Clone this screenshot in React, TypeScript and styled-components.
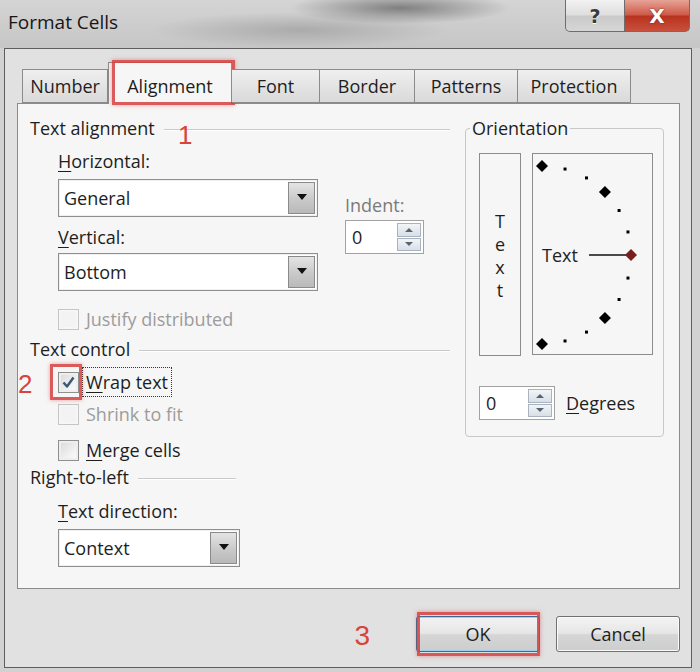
import React from 'react';
import styled, { createGlobalStyle } from 'styled-components';

const GlobalStyle = createGlobalStyle`
  html, body {
    margin: 0;
    padding: 0;
  }
  body {
    font-family: "Open Sans", "Noto Sans", "Liberation Sans", sans-serif;
    color: #1e1e1e;
  }
`;

const Window = styled.div`
  width: 700px;
  height: 672px;
  background: #d2d2d2;
  display: flex;
  flex-direction: column;
  overflow: hidden;
`;

const TitleBar = styled.div`
  height: 48px;
  flex-shrink: 0;
  display: flex;
  align-items: flex-start;
  background:
    radial-gradient(ellipse 110px 16px at 400px 8px, rgba(60, 60, 60, 0.55), transparent),
    radial-gradient(ellipse 150px 18px at 300px 30px, rgba(110, 110, 110, 0.35), transparent),
    linear-gradient(#d4d4d4, #c6c6c6);
`;

const Title = styled.div`
  flex: 1;
  font-size: 19px;
  line-height: 26px;
  padding: 9px 0 0 8px;
  color: #161616;
`;

const CaptionButtons = styled.div`
  display: flex;
  margin-right: 10px;
`;

const CaptionButton = styled.div<{ $close?: boolean }>`
  width: ${(p) => (p.$close ? 65 : 60)}px;
  height: 32px;
  box-sizing: border-box;
  display: flex;
  align-items: center;
  justify-content: center;
  border: 1px solid #6d6d6d;
  border-top: none;
  border-left: ${(p) => (p.$close ? 'none' : '1px solid #6d6d6d')};
  border-radius: ${(p) => (p.$close ? '0 0 5px 0' : '0 0 0 5px')};
  background: ${(p) =>
    p.$close
      ? 'linear-gradient(#e6a397, #cf5a48 48%, #b8321f 52%, #c9503c)'
      : 'linear-gradient(#f2f2f2, #dedede 48%, #cacaca 52%, #d6d6d6)'};
  color: ${(p) => (p.$close ? '#fff' : '#3a3a3a')};
  font-family: "DejaVu Sans", sans-serif;
  font-weight: bold;
  font-size: ${(p) => (p.$close ? 20 : 19)}px;
  text-shadow: ${(p) => (p.$close ? '0 0 2px #6a1a10' : '0 1px 0 #fff')};
`;

const Client = styled.div`
  flex: 1;
  margin: 0 8px 4px 4px;
  border: 1px solid #5e5e5e;
  background: #e1e1e1;
  padding: 12px 11px 0 12px;
  display: flex;
  flex-direction: column;
`;

const TabsRow = styled.div`
  display: flex;
  align-items: flex-end;
  height: 42px;
  padding-left: 5px;
  position: relative;
  z-index: 1;
`;

const Tab = styled.div<{ $w: number; $active?: boolean }>`
  position: relative;
  width: ${(p) => p.$w}px;
  height: ${(p) => (p.$active ? 42 : 34)}px;
  box-sizing: border-box;
  margin-bottom: ${(p) => (p.$active ? -1 : 0)}px;
  border: 1px solid #8b8b8b;
  border-bottom: ${(p) => (p.$active ? 'none' : '1px solid #8b8b8b')};
  border-left: ${(p) => (p.$active ? '1px solid #8b8b8b' : 'none')};
  background: ${(p) => (p.$active ? '#f6f6f6' : 'linear-gradient(#efefef, #d9d9d9)')};
  font-size: 18px;
  display: flex;
  align-items: center;
  justify-content: center;
  padding-top: ${(p) => (p.$active ? 4 : 0)}px;
  &:first-child {
    border-left: 1px solid #8b8b8b;
  }
`;

const TabHighlight = styled.div`
  position: absolute;
  top: -3px;
  left: 3px;
  right: -4px;
  bottom: -1px;
  border: 3px solid rgba(214, 64, 64, 0.85);
  box-shadow: 0 0 4px rgba(214, 64, 64, 0.5);
`;

const Panel = styled.div`
  height: 486px;
  box-sizing: border-box;
  border: 1px solid #8b8b8b;
  background: #f6f6f6;
  padding: 12px 15px 0 12px;
  display: flex;
  gap: 15px;
`;

const LeftCol = styled.div`
  width: 420px;
  display: flex;
  flex-direction: column;
`;

const Heading = styled.div<{ $lineEnd?: number }>`
  position: relative;
  display: flex;
  align-items: center;
  font-size: 18px;
  line-height: 24px;
  width: ${(p) => (p.$lineEnd ? `${p.$lineEnd}px` : '100%')};
  &::after {
    content: '';
    flex: 1;
    height: 1px;
    margin: 3px 0 0 9px;
    background: #cacaca;
    box-shadow: 0 1px 0 #fff;
  }
`;

const Annotation = styled.span`
  position: absolute;
  color: #d8443b;
  font-family: "Liberation Sans", sans-serif;
  font-size: 26px;
  line-height: 1;
`;

const Indented = styled.div`
  padding-left: 28px;
  display: flex;
  flex-direction: column;
`;

const Label = styled.div<{ $mt?: number; $tone?: 'grey' | 'mid' }>`
  font-size: 18px;
  line-height: 24px;
  margin-top: ${(p) => p.$mt ?? 0}px;
  color: ${(p) => (p.$tone === 'grey' ? '#9c9c9c' : p.$tone === 'mid' ? '#7a7a7a' : '#1e1e1e')};
  u {
    text-decoration-thickness: 1px;
    text-underline-offset: 3px;
  }
`;

const AlignRow = styled.div`
  display: flex;
  gap: 27px;
`;

const Column = styled.div<{ $pt?: number }>`
  display: flex;
  flex-direction: column;
  padding-top: ${(p) => p.$pt ?? 0}px;
`;

const Select = styled.div<{ $w: number; $mt?: number }>`
  width: ${(p) => p.$w}px;
  height: 38px;
  margin-top: ${(p) => p.$mt ?? 0}px;
  box-sizing: border-box;
  border: 1px solid #8e8e8e;
  box-shadow: inset 0 0 0 1px #f0f0f0;
  background: #fff;
  display: flex;
  align-items: center;
  padding: 2px 2px 2px 5px;
  font-size: 18px;
`;

const SelectText = styled.span`
  flex: 1;
`;

const ArrowButton = styled.div`
  width: 27px;
  align-self: stretch;
  box-sizing: border-box;
  border: 1px solid #8a8a8a;
  background: linear-gradient(#e4e4e4, #c9c9c9 55%, #b9b9b9);
  display: flex;
  align-items: center;
  justify-content: center;
  &::before {
    content: '';
    width: 0;
    height: 0;
    margin-top: -3px;
    border-left: 5px solid transparent;
    border-right: 5px solid transparent;
    border-top: 6px solid #111;
  }
`;

const Spinner = styled.div<{ $w: number; $mt?: number }>`
  width: ${(p) => p.$w}px;
  height: 34px;
  margin-top: ${(p) => p.$mt ?? 0}px;
  box-sizing: border-box;
  border: 1px solid #a2a2a2;
  background: #fff;
  display: flex;
  align-items: stretch;
  padding: 2px;
  font-size: 18px;
`;

const SpinValue = styled.span`
  flex: 1;
  display: flex;
  align-items: center;
  padding-left: 4px;
`;

const SpinButtons = styled.div`
  width: 24px;
  display: flex;
  flex-direction: column;
  gap: 1px;
`;

const SpinButton = styled.div<{ $down?: boolean }>`
  flex: 1;
  border: 1px solid #a9b3bf;
  background: linear-gradient(#f2f5f8, #d8dfe7);
  display: flex;
  align-items: center;
  justify-content: center;
  &::before {
    content: '';
    width: 0;
    height: 0;
    border-left: 4px solid transparent;
    border-right: 4px solid transparent;
    ${(p) => (p.$down ? 'border-top: 4px solid #5a6470;' : 'border-bottom: 4px solid #5a6470;')}
  }
`;

const CheckRow = styled.div<{ $mt?: number }>`
  display: flex;
  align-items: center;
  gap: 7px;
  height: 24px;
  margin-top: ${(p) => p.$mt ?? 0}px;
  font-size: 18px;
`;

const BoxWrap = styled.div`
  position: relative;
  display: flex;
`;

const Box = styled.div<{ $disabled?: boolean }>`
  width: 21px;
  height: 21px;
  box-sizing: border-box;
  border: 1px solid ${(p) => (p.$disabled ? '#c6c6c6' : '#8e8f8f')};
  background: ${(p) =>
    p.$disabled ? '#f3f3f3' : 'linear-gradient(135deg, #d8d8d8, #f4f4f4 70%, #fbfbfb)'};
  box-shadow: inset 0 0 0 2px ${(p) => (p.$disabled ? '#f6f6f6' : '#eeeeee')};
  display: flex;
  align-items: center;
  justify-content: center;
`;

const CheckHighlight = styled.div`
  position: absolute;
  top: -8px;
  left: -8px;
  right: -3px;
  bottom: -7px;
  border: 3px solid rgba(214, 64, 64, 0.85);
  box-shadow: 0 0 4px rgba(214, 64, 64, 0.5);
`;

const FocusText = styled.span`
  outline: 1px dotted #333;
  padding: 1px 3px;
  margin-left: -3px;
  line-height: 26px;
`;

const Orientation = styled.fieldset`
  margin: 0;
  width: 199px;
  height: 321px;
  box-sizing: border-box;
  border: 1px solid #c8c8c8;
  border-radius: 4px;
  padding: 13px 0 0 13px;
  display: flex;
  flex-direction: column;
`;

const Legend = styled.legend`
  font-size: 18px;
  line-height: 24px;
  padding: 0 2px;
  margin-left: -9px;
`;

const DialRow = styled.div`
  display: flex;
  gap: 11px;
`;

const VerticalText = styled.div`
  width: 42px;
  height: 203px;
  box-sizing: border-box;
  border: 1px solid #8c8c8c;
  display: flex;
  flex-direction: column;
  align-items: center;
  justify-content: center;
  font-size: 18px;
  line-height: 23px;
  padding-top: 2px;
`;

const DialBox = styled.div`
  width: 121px;
  height: 202px;
  box-sizing: border-box;
  border: 1px solid #8c8c8c;
  display: flex;
`;

const DegreesRow = styled.div`
  display: flex;
  align-items: center;
  gap: 11px;
  margin-top: 30px;
  font-size: 18px;
  u {
    text-underline-offset: 3px;
  }
`;

const ButtonRow = styled.div`
  display: flex;
  justify-content: flex-end;
  align-items: center;
  gap: 16px;
  margin-top: 27px;
`;

const Number3 = styled.span`
  color: #d8443b;
  font-family: "Liberation Sans", sans-serif;
  font-size: 28px;
  margin-right: 30px;
  padding-top: 4px;
`;

const Button = styled.div<{ $default?: boolean }>`
  position: relative;
  width: 124px;
  height: 36px;
  box-sizing: border-box;
  border: 1px solid ${(p) => (p.$default ? '#3a6a93' : '#707070')};
  border-radius: 3px;
  background: linear-gradient(#f3f3f3, #e6e6e6 48%, #d6d6d6 52%, #cdcdcd);
  box-shadow: inset 0 0 0 1px ${(p) => (p.$default ? '#9fd0ef' : '#fbfbfb')};
  display: flex;
  align-items: center;
  justify-content: center;
  font-size: 18px;
`;

const ButtonHighlight = styled.div`
  position: absolute;
  top: -5px;
  left: 0;
  right: -1px;
  bottom: -5px;
  border: 3px solid rgba(214, 64, 64, 0.85);
  box-shadow: 0 0 4px rgba(214, 64, 64, 0.5);
`;

const Check = () => (
  <svg width="15" height="15" viewBox="0 0 15 15">
    <path d="M2.5 7.5 L6 11.5 L12.5 2.5" fill="none" stroke="#3b5878" strokeWidth="2.4" strokeLinejoin="round" />
  </svg>
);

// semicircle of ticks every 15°, diamonds every 45°
const Dial = () => {
  const cx = 9;
  const cy = 101;
  const r = 89;
  const marks = [];
  for (let a = 90; a >= -90; a -= 15) {
    const rad = (a * Math.PI) / 180;
    const x = cx + r * Math.cos(rad);
    const y = cy - r * Math.sin(rad);
    if (a % 45 === 0) {
      const s = 6;
      marks.push(
        <polygon
          key={a}
          points={`${x},${y - s} ${x + s},${y} ${x},${y + s} ${x - s},${y}`}
          fill={a === 0 ? '#7a1d1d' : '#000'}
        />
      );
    } else {
      marks.push(<rect key={a} x={x - 1.5} y={y - 1.5} width="3" height="3" fill="#000" />);
    }
  }
  return (
    <svg width="119" height="200" viewBox="0 0 119 200">
      <text x="9" y="108" fontSize="18" fontFamily='"Open Sans", "Noto Sans", sans-serif' fill="#222">
        Text
      </text>
      <line x1="56" y1="101" x2="93" y2="101" stroke="#111" strokeWidth="1.3" />
      {marks}
    </svg>
  );
};

export default function App() {
  return (
    <>
      <GlobalStyle />
      <Window>
        <TitleBar>
          <Title>Format Cells</Title>
          <CaptionButtons>
            <CaptionButton>?</CaptionButton>
            <CaptionButton $close>X</CaptionButton>
          </CaptionButtons>
        </TitleBar>
        <Client>
          <TabsRow>
            <Tab $w={86}>Number</Tab>
            <Tab $w={124} $active>
              Alignment
              <TabHighlight />
            </Tab>
            <Tab $w={88}>Font</Tab>
            <Tab $w={95}>Border</Tab>
            <Tab $w={103}>Patterns</Tab>
            <Tab $w={113}>Protection</Tab>
          </TabsRow>
          <Panel>
            <LeftCol>
              <Heading>
                Text alignment
                <Annotation style={{ left: 148, top: 6 }}>1</Annotation>
              </Heading>
              <Indented>
                <AlignRow>
                  <Column>
                    <Label $mt={9}>
                      <u>H</u>orizontal:
                    </Label>
                    <Select $w={260} $mt={6}>
                      <SelectText>General</SelectText>
                      <ArrowButton />
                    </Select>
                    <Label $mt={8}>
                      <u>V</u>ertical:
                    </Label>
                    <Select $w={260} $mt={4}>
                      <SelectText>Bottom</SelectText>
                      <ArrowButton />
                    </Select>
                  </Column>
                  <Column $pt={53}>
                    <Label $tone="mid">Indent:</Label>
                    <Spinner $w={79} $mt={3}>
                      <SpinValue>0</SpinValue>
                      <SpinButtons>
                        <SpinButton />
                        <SpinButton $down />
                      </SpinButtons>
                    </Spinner>
                  </Column>
                </AlignRow>
                <CheckRow $mt={16}>
                  <Box $disabled />
                  <Label $tone="grey">Justify distributed</Label>
                </CheckRow>
              </Indented>
              <Heading style={{ marginTop: 6 }}>Text control</Heading>
              <Indented>
                <CheckRow $mt={9}>
                  <BoxWrap>
                    <Box>
                      <Check />
                    </Box>
                    <CheckHighlight />
                    <Annotation style={{ left: -40, top: -1 }}>2</Annotation>
                  </BoxWrap>
                  <FocusText>
                    <Label as="span">
                      <u>W</u>rap text
                    </Label>
                  </FocusText>
                </CheckRow>
                <CheckRow $mt={8}>
                  <Box $disabled />
                  <Label $tone="grey">Shrink to fit</Label>
                </CheckRow>
                <CheckRow $mt={12}>
                  <Box />
                  <Label>
                    <u>M</u>erge cells
                  </Label>
                </CheckRow>
              </Indented>
              <Heading $lineEnd={206} style={{ marginTop: 3 }}>
                Right-to-left
              </Heading>
              <Indented>
                <Label $mt={10}>
                  <u>T</u>ext direction:
                </Label>
                <Select $w={182} $mt={6}>
                  <SelectText>Context</SelectText>
                  <ArrowButton />
                </Select>
              </Indented>
            </LeftCol>
            <Orientation>
              <Legend>Orientation</Legend>
              <DialRow>
                <VerticalText>
                  <span>T</span>
                  <span>e</span>
                  <span>x</span>
                  <span>t</span>
                </VerticalText>
                <DialBox>
                  <Dial />
                </DialBox>
              </DialRow>
              <DegreesRow>
                <Spinner $w={76}>
                  <SpinValue>0</SpinValue>
                  <SpinButtons>
                    <SpinButton />
                    <SpinButton $down />
                  </SpinButtons>
                </Spinner>
                <span>
                  <u>D</u>egrees
                </span>
              </DegreesRow>
            </Orientation>
          </Panel>
          <ButtonRow>
            <Number3>3</Number3>
            <Button $default>
              OK
              <ButtonHighlight />
            </Button>
            <Button>Cancel</Button>
          </ButtonRow>
        </Client>
      </Window>
    </>
  );
}
